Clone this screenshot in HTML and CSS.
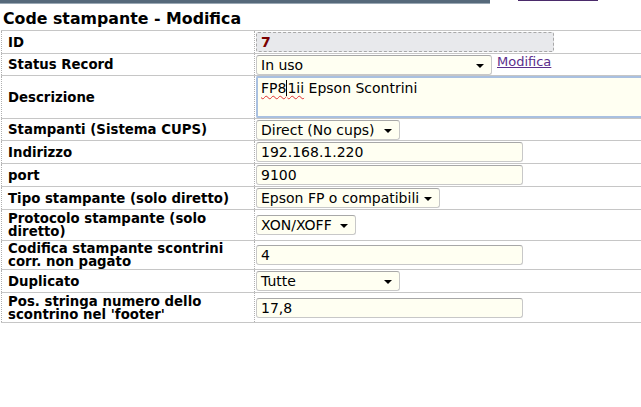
FILE: index.html
```html
<!DOCTYPE html>
<html>
<head>
<meta charset="utf-8">
<link rel="stylesheet" href="styles.css">
</head>
<body>
<div class="topline">
  <div class="topbar"></div>
  <div class="toplink"></div>
</div>
<h1 class="title">Code stampante - Modifica</h1>
<table class="form">
  <tr class="r23">
    <td class="lbl">ID</td>
    <td class="val"><div class="ro">7</div></td>
  </tr>
  <tr class="r22">
    <td class="lbl">Status Record</td>
    <td class="val"><span class="sel w235">In uso</span><a class="link" href="#">Modifica</a></td>
  </tr>
  <tr class="r43">
    <td class="lbl">Descrizione</td>
    <td class="val"><div class="area"><span class="spell">FP8</span><span class="caret"></span><span class="spell">1ii</span> Epson Scontrini</div></td>
  </tr>
  <tr class="r22">
    <td class="lbl">Stampanti (Sistema CUPS)</td>
    <td class="val"><span class="sel w143">Direct (No cups)</span></td>
  </tr>
  <tr class="r23">
    <td class="lbl">Indirizzo</td>
    <td class="val"><span class="inp">192.168.1.220</span></td>
  </tr>
  <tr class="r23">
    <td class="lbl">port</td>
    <td class="val"><span class="inp">9100</span></td>
  </tr>
  <tr class="r23">
    <td class="lbl">Tipo stampante (solo diretto)</td>
    <td class="val"><span class="sel w183">Epson FP o compatibili</span></td>
  </tr>
  <tr class="r31">
    <td class="lbl">Protocolo stampante (solo diretto)</td>
    <td class="val"><span class="sel w99">XON/XOFF</span></td>
  </tr>
  <tr class="r29">
    <td class="lbl">Codifica stampante scontrini corr. non pagato</td>
    <td class="val"><span class="inp">4</span></td>
  </tr>
  <tr class="r23">
    <td class="lbl">Duplicato</td>
    <td class="val"><span class="sel w143">Tutte</span></td>
  </tr>
  <tr class="r30">
    <td class="lbl">Pos. stringa numero dello scontrino nel 'footer'</td>
    <td class="val"><span class="inp">17,8</span></td>
  </tr>
</table>
</body>
</html>
```

FILE: styles.css
```css
html { overflow: hidden; }
body {
  margin: 0;
  font-family: "DejaVu Sans", Verdana, sans-serif;
  font-size: 13px;
  color: #000;
  background: #fff;
}
.topline {
  display: flex;
  height: 4px;
  align-items: flex-start;
}
.topbar {
  width: 490px;
  height: 3px;
  background: #56697a;
  border-bottom: 1px solid #9aa8b4;
}
.toplink {
  margin-left: 28px;
  width: 80px;
  height: 1px;
  background: #4a2a6a;
}
.title {
  margin: 4px 0 0 3px;
  font-size: 15.8px;
  font-weight: bold;
  line-height: 22px;
  height: 22px;
}
.form {
  border-collapse: collapse;
  width: 700px;
  margin-left: 1px;
}
.form td {
  border-top: 1px solid #c6c6c6;
  border-bottom: 1px solid #c6c6c6;
  padding: 0;
  vertical-align: middle;
}
.lbl {
  width: 246px;
  padding: 0 0 0 6px !important;
  font-weight: bold;
  font-size: 13.3px;
  line-height: 13px;
  border-left: 1px dotted #b0b0b0;
  border-right: 1px dotted #b0b0b0;
}
.val {
  padding-left: 1px !important;
  font-size: 14px;
}
.r22 { height: 22px; }
.r23 { height: 23px; }
.r29 { height: 29px; }
.r30 { height: 30px; }
.r31 { height: 31px; }
.r43 { height: 43px; }
.ro {
  width: 292px;
  height: 18px;
  background: #e8e9ec;
  border: 1px dashed #a8a8a8;
  border-radius: 2px;
  color: #7a0000;
  font-weight: bold;
  line-height: 18px;
  padding-left: 4px;
  box-sizing: content-box;
}
.sel, .inp {
  display: inline-block;
  position: relative;
  height: 18px;
  line-height: 19px;
  padding-left: 4px;
  background: #fffff2;
  border: 1px solid #c8c8c8;
  border-top-color: #a8a8a8;
  border-radius: 3px;
  vertical-align: middle;
  box-sizing: content-box;
}
.inp { width: 261px; }
.sel::after {
  content: "";
  position: absolute;
  right: 7px;
  top: 8px;
  border-left: 4px solid transparent;
  border-right: 4px solid transparent;
  border-top: 4px solid #000;
}
.w235 { width: 230px; }
.w143 { width: 138px; }
.w183 { width: 178px; }
.w99 { width: 94px; }
.link {
  color: #5b2e8c;
  margin-left: 5px;
  font-size: 13px;
  vertical-align: 3px;
}
.area {
  height: 37px;
  background: #fffff2;
  border: 2px solid #a9c0e0;
  border-right: none;
  border-radius: 2px;
  padding: 1px 0 0 3px;
  line-height: 18px;
}
.spell {
  text-decoration: underline wavy #e03030;
  text-decoration-thickness: 1px;
  text-underline-offset: 2px;
}
.caret {
  display: inline-block;
  width: 1px;
  height: 16px;
  background: #000;
  vertical-align: -3px;
}
```
